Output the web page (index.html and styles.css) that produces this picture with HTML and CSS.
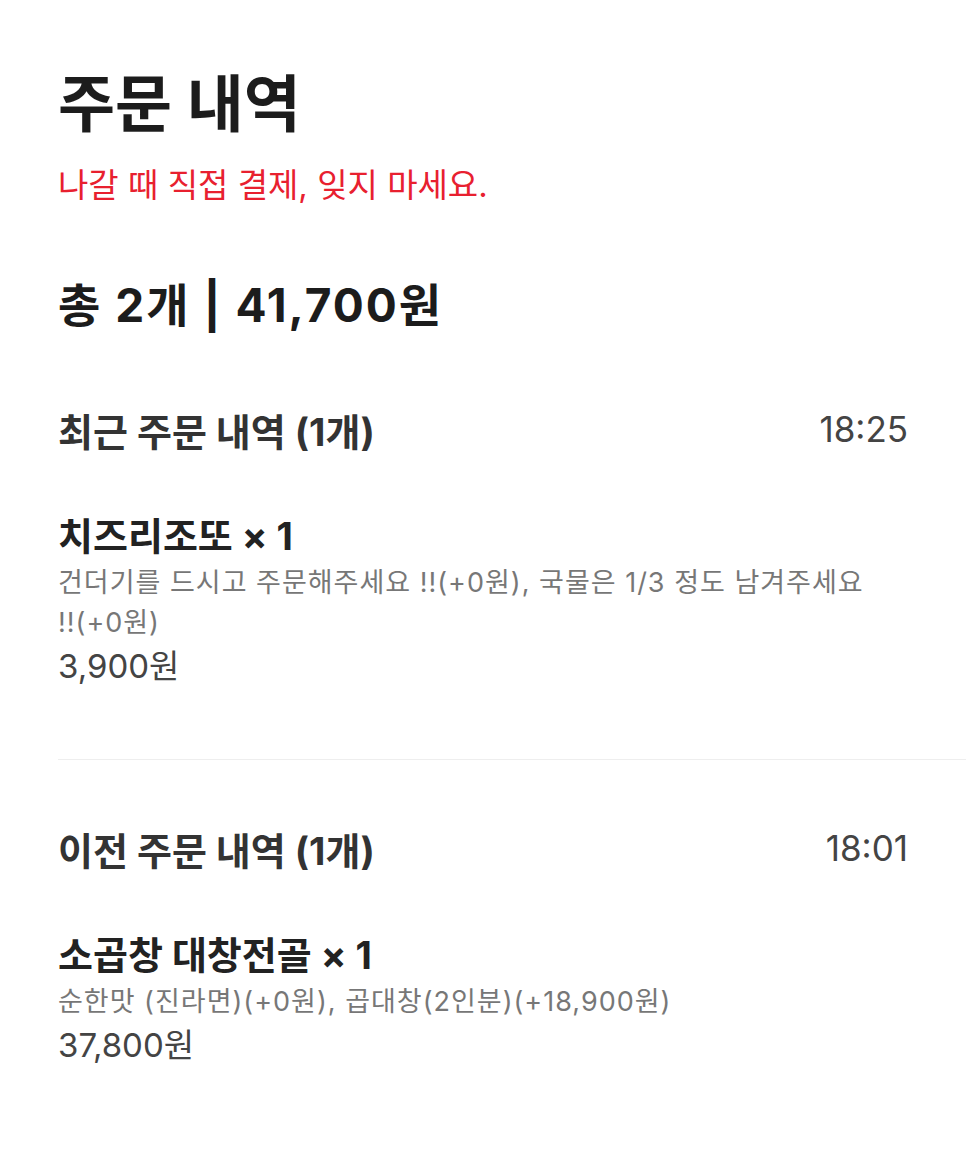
FILE: index.html
```html
<!DOCTYPE html>
<html lang="ko">
<head>
	<meta charset="UTF-8">
	<title>주문 내역</title>
	<link rel="stylesheet" href="styles.css">
</head>
<body>
	<!--상단 제목-->
	<div class="head">
		<h1 class="title">주문 내역</h1>
		<p class="notice">나갈 때 직접 결제, 잊지 마세요.</p>
	</div>
	<div class="total">총 2개 | 41,700원</div>

	<!--최근 주문-->
	<div class="section">
		<div class="sec-head">
			<span class="sec-title">최근 주문 내역 (1개)</span>
			<span class="sec-time">18:25</span>
		</div>
		<div class="item">
			<div class="item-name">치즈리조또 × 1</div>
			<div class="item-opt">건더기를 드시고 주문해주세요 <span class="nowrap">!!(+0원),</span> 국물은 1/3 정도 남겨주세요 <span class="nowrap">!!(+0원)</span></div>
			<div class="item-price">3,900원</div>
		</div>
	</div>

	<!--이전 주문-->
	<div class="section">
		<div class="sec-head">
			<span class="sec-title">이전 주문 내역 (1개)</span>
			<span class="sec-time">18:01</span>
		</div>
		<div class="item">
			<div class="item-name">소곱창 대창전골 × 1</div>
			<div class="item-opt">순한맛 (진라면)(+0원), 곱대창(2인분)(+18,900원)</div>
			<div class="item-price">37,800원</div>
		</div>
	</div>
</body>
</html>
```

FILE: styles.css
```css
*{
	margin:0;
	padding:0;
	box-sizing:border-box;
}
body{
	background:#fff;
	font-family:Inter,"Noto Sans CJK KR",sans-serif;
	color:#222;
	padding-left:58px;
}
.head{
	padding-top:65px;
}
.title{
	font-size:62px;
	font-weight:700;
	line-height:80px;
	color:#1c1c1c;
}
.notice{
	margin-top:20px;
	font-size:33px;
	line-height:40px;
	color:#e8202f;
}
.total{
	margin-top:64px;
	font-size:46px;
	font-weight:700;
	line-height:72px;
	color:#1c1c1c;
	letter-spacing:2px;
}
.section{
	padding-right:58px;
}
.section + .section{
	border-top:1px solid #eeeeee;
}
.sec-head{
	display:flex;
	justify-content:space-between;
	align-items:center;
	height:48px;
	margin-top:64px;
}
.sec-title{
	font-size:38px;
	font-weight:700;
	color:#333;
}
.sec-time{
	font-size:35px;
	color:#444;
}
.item{
	padding-top:60px;
	padding-bottom:70px;
}
.item-name{
	font-size:38px;
	font-weight:700;
	line-height:46px;
	color:#222;
}
.item-opt{
	margin-top:4px;
	font-size:27px;
	line-height:40px;
	color:#777;
	letter-spacing:1px;
}
.nowrap{
	white-space:nowrap;
}
.item-price{
	font-size:33px;
	line-height:46px;
	color:#444;
}
```
